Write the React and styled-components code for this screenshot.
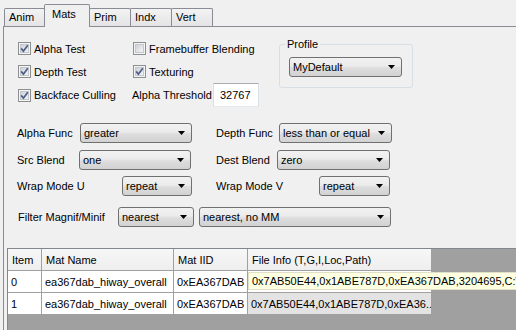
import React from 'react';
import styled, { createGlobalStyle } from 'styled-components';

const Global = createGlobalStyle`
  html, body { margin: 0; padding: 0; background: #f0f0f0; overflow: hidden; }
  body { font-family: "Liberation Sans", Arial, sans-serif; font-size: 11px; color: #000; }
  * { box-sizing: border-box; }
`;

const Window = styled.div`
  width: 516px;
  height: 330px;
  overflow: hidden;
  display: flex;
  flex-direction: column;
  background: #f0f0f0;
`;

const TabBar = styled.div`
  flex: none;
  display: flex;
  align-items: flex-end;
  height: 27px;
  padding-left: 4px;
  position: relative;
  z-index: 1;
`;

const Tab = styled.div`
  width: ${p => (p.$active ? 46 : 42)}px;
  height: ${p => (p.$active ? 23 : 18)}px;
  margin-bottom: ${p => (p.$active ? 0 : 1)}px;
  margin-left: ${p => (p.$first ? 0 : p.$active ? -2 : -1)}px;
  padding-left: ${p => (p.$active ? 7 : 4)}px;
  padding-bottom: ${p => (p.$active ? 5 : 1)}px;
  display: flex;
  align-items: center;
  border: 1px solid #898c95;
  border-bottom: none;
  border-radius: 2px 2px 0 0;
  background: ${p => (p.$active ? '#f0f0f0' : 'linear-gradient(#f3f3f3, #e4e4e4)')};
  position: relative;
  z-index: ${p => (p.$active ? 2 : 1)};
`;

const Pane = styled.div`
  flex: 1;
  margin-left: 3px;
  margin-top: -1px;
  border-top: 1px solid #898c95;
  border-left: 1px solid #898c95;
  background: #f0f0f0;
  display: flex;
  flex-direction: column;
  padding-top: 10px;
  position: relative;
  z-index: 0;
  min-height: 0;
`;

const TopSection = styled.div`
  display: flex;
  align-items: flex-start;
  padding-left: 14px;
`;

const CheckGrid = styled.div`
  display: grid;
  grid-template-columns: 115px 146px;
  grid-template-rows: 23px 23px 24px;
  align-items: center;
`;

const CheckItem = styled.label`
  display: flex;
  align-items: center;
  gap: 3px;
  white-space: nowrap;
`;

const InlineField = styled.div`
  display: flex;
  align-items: center;
  margin-left: -1px;
`;

const FieldLabel = styled.span`
  width: ${p => p.$w}px;
  padding-left: ${p => p.$pl || 0}px;
  flex: none;
  white-space: nowrap;
`;

const TextInput = styled.div`
  width: 46px;
  height: 24px;
  border: 1px solid #abadb3;
  border-left-color: #dbdfe6;
  border-right-color: #dbdfe6;
  border-bottom-color: #e3e9ef;
  background: #fff;
  padding-left: 6px;
  display: flex;
  align-items: center;
`;

const GroupBox = styled.fieldset`
  margin: 2px 0 0 0;
  width: 134px;
  border: 1px solid #d5dfe5;
  border-radius: 3px;
  padding: 8px 9px 10px 9px;
  min-width: 0;
`;

const GroupTitle = styled.legend`
  padding: 0 2px;
  margin-left: -4px;
  line-height: 10px;
  font-size: 11px;
`;

const FormSection = styled.div`
  display: flex;
  flex-direction: column;
  padding-left: 13px;
  margin-top: 16px;
`;

const FormRow = styled.div`
  display: flex;
  align-items: center;
  height: 20px;
  margin-top: ${p => p.$mt || 0}px;
`;

const Half = styled.div`
  display: flex;
  align-items: center;
  width: ${p => (p.$w ? `${p.$w}px` : 'auto')};
  flex: none;
  gap: ${p => p.$gap || 0}px;
`;

const ComboBox = styled.div`
  width: ${p => p.$w}px;
  height: 20px;
  flex: none;
  border: 1px solid #707070;
  border-radius: 3px;
  background: linear-gradient(#f2f2f2 0%, #ebebeb 45%, #dddddd 55%, #d2d2d2 100%);
  display: flex;
  align-items: center;
  justify-content: space-between;
  padding: 0 6px 0 3px;
  white-space: nowrap;
`;

const TableView = styled.div`
  flex: 1;
  margin: 21px 0 0 3px;
  border-top: 1px solid #828790;
  border-left: 1px solid #828790;
  background: #a0a0a0;
  display: flex;
  flex-direction: column;
`;

const TRow = styled.div`
  display: flex;
  height: ${p => p.$h || 22}px;
  flex: none;
`;

const HeadCell = styled.div`
  width: ${p => p.$w}px;
  flex: none;
  background: linear-gradient(#f7f7f7, #eeeeee);
  border-right: 1px solid #a0a0a0;
  border-bottom: 1px solid #a0a0a0;
  padding-left: 4px;
  display: flex;
  align-items: center;
  white-space: nowrap;
`;

const Cell = styled.div`
  width: ${p => p.$w}px;
  flex: none;
  background: ${p => p.$bg || '#fff'};
  border-right: 1px solid #a0a0a0;
  border-bottom: 1px solid #a0a0a0;
  padding-left: 3px;
  display: flex;
  align-items: center;
  white-space: nowrap;
  overflow: ${p => (p.$overflow ? 'visible' : 'hidden')};
  position: relative;
`;

const TipBox = styled.div`
  position: absolute;
  left: 0;
  top: 1px;
  height: 18px;
  padding: 0 3px;
  background: #ffffe1;
  border: 1px solid #e0dfc8;
  display: flex;
  align-items: center;
  white-space: nowrap;
  z-index: 3;
`;

const Check = ({ checked }) => (
  <svg width="13" height="13" viewBox="0 0 13 13" style={{ flex: 'none' }}>
    <defs>
      <linearGradient id="cbg" x1="0" y1="0" x2="1" y2="1">
        <stop offset="0" stopColor="#cbcfd5" />
        <stop offset="1" stopColor="#f6f6f6" />
      </linearGradient>
    </defs>
    <rect x="0.5" y="0.5" width="12" height="12" fill="#f4f4f4" stroke="#8e8f8f" />
    <rect x="2.5" y="2.5" width="8" height="8" fill="url(#cbg)" stroke="#c4c8ce" />
    {checked && (
      <path d="M3.2 6.4 L5.4 9.2 L9.8 3.2" stroke="#4b5d86" strokeWidth="1.7" fill="none" />
    )}
  </svg>
);

const Arrow = () => (
  <svg width="7" height="4" viewBox="0 0 7 4" style={{ flex: 'none' }}>
    <path d="M0 0 H7 L3.5 4 Z" fill="#000" />
  </svg>
);

const Combo = ({ w, children }) => (
  <ComboBox $w={w}>
    <span>{children}</span>
    <Arrow />
  </ComboBox>
);

const cols = [34, 132, 74, 184];

export default function App() {
  return (
    <>
      <Global />
      <Window>
        <TabBar>
          <Tab $first>Anim</Tab>
          <Tab $active>Mats</Tab>
          <Tab>Prim</Tab>
          <Tab>Indx</Tab>
          <Tab>Vert</Tab>
        </TabBar>
        <Pane>
          <TopSection>
            <CheckGrid>
              <CheckItem><Check checked />Alpha Test</CheckItem>
              <CheckItem><Check />Framebuffer Blending</CheckItem>
              <CheckItem><Check checked />Depth Test</CheckItem>
              <CheckItem><Check checked />Texturing</CheckItem>
              <CheckItem><Check checked />Backface Culling</CheckItem>
              <InlineField>
                <FieldLabel $w={81}>Alpha Threshold</FieldLabel>
                <TextInput>32767</TextInput>
              </InlineField>
            </CheckGrid>
            <GroupBox>
              <GroupTitle>Profile</GroupTitle>
              <Combo w={113}>MyDefault</Combo>
            </GroupBox>
          </TopSection>

          <FormSection>
            <FormRow>
              <Half $w={199}>
                <FieldLabel $w={63}>Alpha Func</FieldLabel>
                <Combo w={112}>greater</Combo>
              </Half>
              <Half>
                <FieldLabel $w={63}>Depth Func</FieldLabel>
                <Combo w={113}>less than or equal</Combo>
              </Half>
            </FormRow>
            <FormRow $mt={7}>
              <Half $w={199}>
                <FieldLabel $w={62}>Src Blend</FieldLabel>
                <Combo w={112}>one</Combo>
              </Half>
              <Half>
                <FieldLabel $w={61}>Dest Blend</FieldLabel>
                <Combo w={113}>zero</Combo>
              </Half>
            </FormRow>
            <FormRow $mt={6}>
              <Half $w={199}>
                <FieldLabel $w={105}>Wrap Mode U</FieldLabel>
                <Combo w={70}>repeat</Combo>
              </Half>
              <Half>
                <FieldLabel $w={103}>Wrap Mode V</FieldLabel>
                <Combo w={71}>repeat</Combo>
              </Half>
            </FormRow>
            <FormRow $mt={11}>
              <Half $gap={5}>
                <FieldLabel $w={96} $pl={1}>Filter Magnif/Minif</FieldLabel>
                <Combo w={76}>nearest</Combo>
                <Combo w={192}>nearest, no MM</Combo>
              </Half>
            </FormRow>
          </FormSection>

          <TableView>
            <TRow>
              <HeadCell $w={cols[0]}>Item</HeadCell>
              <HeadCell $w={cols[1]}>Mat Name</HeadCell>
              <HeadCell $w={cols[2]}>Mat IID</HeadCell>
              <HeadCell $w={cols[3]}>File Info (T,G,I,Loc,Path)</HeadCell>
            </TRow>
            <TRow>
              <Cell $w={cols[0]}>0</Cell>
              <Cell $w={cols[1]}>ea367dab_hiway_overall</Cell>
              <Cell $w={cols[2]}>0xEA367DAB</Cell>
              <Cell $w={cols[3]} $overflow>
                <TipBox>0x7AB50E44,0x1ABE787D,0xEA367DAB,3204695,C:\U</TipBox>
              </Cell>
            </TRow>
            <TRow>
              <Cell $w={cols[0]}>1</Cell>
              <Cell $w={cols[1]}>ea367dab_hiway_overall</Cell>
              <Cell $w={cols[2]}>0xEA367DAB</Cell>
              <Cell $w={cols[3]} $bg="#e3e3e3">0x7AB50E44,0x1ABE787D,0xEA36...</Cell>
            </TRow>
          </TableView>
        </Pane>
      </Window>
    </>
  );
}
